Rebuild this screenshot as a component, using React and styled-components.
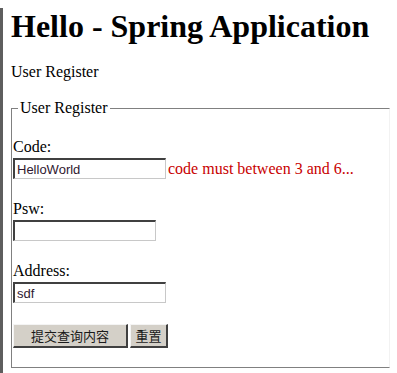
import React from 'react';
import styled, { createGlobalStyle } from 'styled-components';

const GlobalStyle = createGlobalStyle`
  html, body {
    margin: 0;
    padding: 0;
    background: #fff;
  }
  body {
    font-family: "Liberation Serif", "Times New Roman", serif;
    font-size: 16px;
    color: #000;
  }
`;

function App() {
  return (
    <>
      <GlobalStyle />
      <Page>
        <Title>Hello - Spring Application</Title>
        <Intro>User Register</Intro>
        <Form onSubmit={(e) => e.preventDefault()}>
          <Legend>User Register</Legend>
          <Fields>
            <Field>
              <Label>Code:</Label>
              <InputRow>
                <Input type="text" defaultValue="HelloWorld" $width={153} />
                <ErrorMsg>code must between 3 and 6...</ErrorMsg>
              </InputRow>
            </Field>
            <Field>
              <Label>Psw:</Label>
              <InputRow>
                <Input type="password" $width={143} />
              </InputRow>
            </Field>
            <Field>
              <Label>Address:</Label>
              <InputRow>
                <Input type="text" defaultValue="sdf" $width={153} />
              </InputRow>
            </Field>
            <Buttons>
              <Button type="submit" $width={115}>提交查询内容</Button>
              <Button type="reset" $width={38}>重置</Button>
            </Buttons>
          </Fields>
        </Form>
      </Page>
    </>
  );
}

const Page = styled.div`
  min-height: 100vh;
  box-sizing: border-box;
  border-left: 3px solid #5e5e5e;
  padding: 0 0 0 8px;
`;

const Title = styled.h1`
  margin: 8px 0 0;
  font-size: 32px;
  line-height: 37px;
  font-weight: bold;
  color: #000;
`;

const Intro = styled.p`
  margin: 18px 0 0;
  line-height: 18px;
`;

const Form = styled.fieldset`
  box-sizing: border-box;
  width: 379px;
  margin: 18px 0 0;
  padding: 21px 0 19px 1px;
  border: 1px solid #808080;
  border-right-color: #f2f2f2;
  min-inline-size: 0;
`;

const Legend = styled.legend`
  margin-left: 5px;
  padding: 0 2px;
  line-height: 18px;
  font-family: "Liberation Serif", "Times New Roman", serif;
`;

const Fields = styled.div`
  display: flex;
  flex-direction: column;
  gap: 21px;
`;

const Field = styled.div`
  display: flex;
  flex-direction: column;
  gap: 2px;
`;

const Label = styled.label`
  line-height: 18px;
  font-family: "Liberation Serif", "Times New Roman", serif;
`;

const InputRow = styled.div`
  display: flex;
  align-items: baseline;
  gap: 2px;
`;

const Input = styled.input`
  box-sizing: border-box;
  width: ${(p) => p.$width}px;
  height: 21px;
  margin: 0;
  padding: 0 2px;
  font-family: "Liberation Sans", Arial, sans-serif;
  font-size: 13px;
  color: #301830;
  background: #fff;
  border-style: solid;
  border-width: 2px 1px 1px 2px;
  border-color: #404040 #c8c8c8 #c8c8c8 #404040;
  outline: none;
`;

const ErrorMsg = styled.span`
  font-family: "Liberation Serif", "Times New Roman", serif;
  font-size: 16px;
  color: #c80000;
  line-height: 18px;
`;

const Buttons = styled.div`
  display: flex;
  gap: 2px;
`;

const Button = styled.button`
  box-sizing: border-box;
  width: ${(p) => p.$width}px;
  height: 24px;
  margin: 0;
  padding: 0;
  font-family: "Noto Sans CJK SC", sans-serif;
  font-size: 13px;
  color: #1a1a1a;
  background: #d4d0c8;
  border-style: solid;
  border-width: 1px 2px 2px 1px;
  border-color: #f4f4f4 #404040 #404040 #f4f4f4;
  cursor: pointer;
`;

export default App;
